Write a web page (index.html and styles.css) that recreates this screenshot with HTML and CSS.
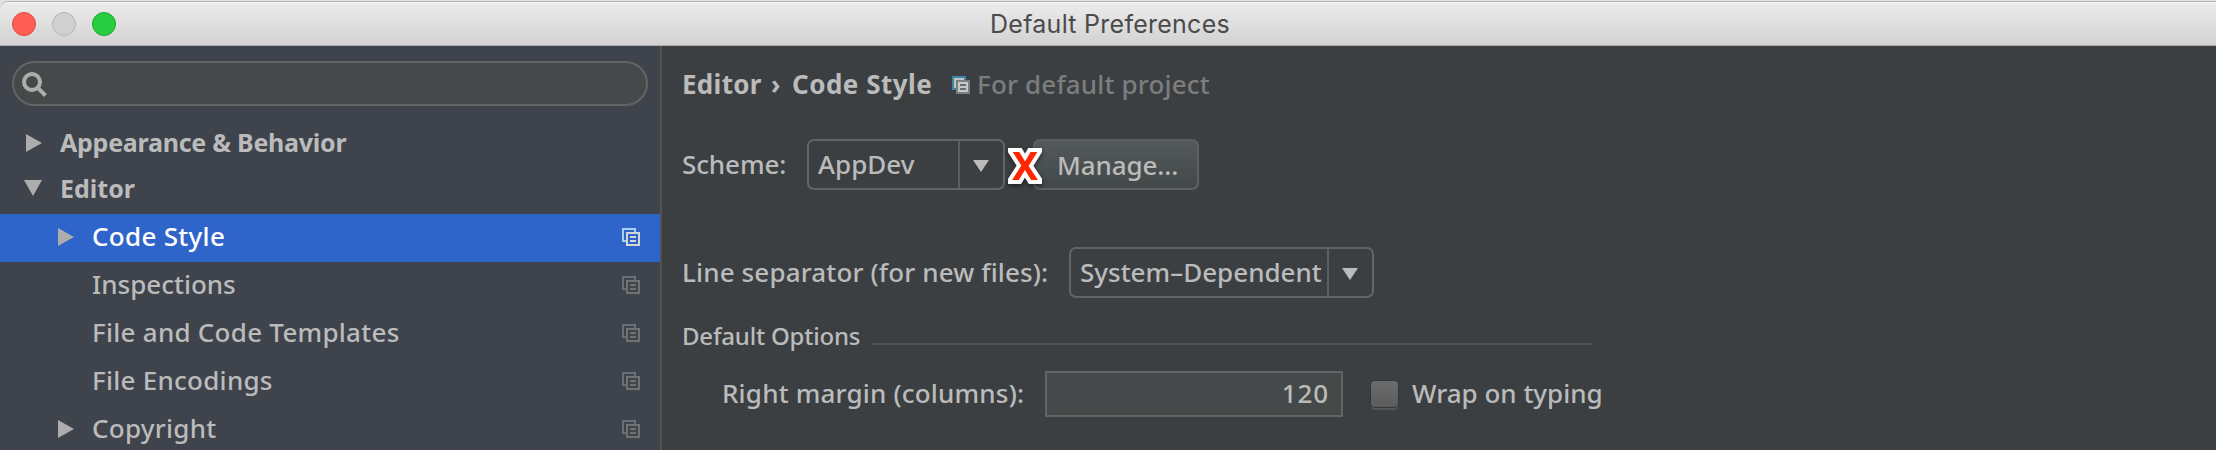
FILE: index.html
```
<!DOCTYPE html>
<html lang="en">
<head>
<meta charset="utf-8">
<title>Default Preferences</title>
<link rel="stylesheet" href="styles.css">
</head>
<body>
<svg width="0" height="0" class="defs" aria-hidden="true">
  <symbol id="right" viewBox="0 0 16 18"><path d="M0 0L16 9L0 18Z"/></symbol>
  <symbol id="down" viewBox="0 0 18 16" preserveAspectRatio="none"><path d="M0 0H18L9 16Z"/></symbol>
  <symbol id="pages" viewBox="0 0 18 18">
    <path class="back" d="M0 0H14V4H12V2H2V12H4V14H0Z"/>
    <path class="front" fill-rule="evenodd" d="M4 4H18V18H4ZM6 6V16H16V6ZM8 8H14V10H8ZM8 12H14V14H8Z"/>
  </symbol>
</svg>
<div class="window">
  <header class="titlebar">
    <div class="lights">
      <span class="light close"></span><span class="light minimize"></span><span class="light zoom"></span>
    </div>
    <h1 class="title">Default Preferences</h1>
  </header>
  <div class="body">
    <aside class="sidebar">
      <div class="search">
        <svg class="magnifier" viewBox="0 0 26 26"><circle cx="10" cy="10" r="8"/><path d="M15.8 15.8L23.5 23.5"/></svg>
      </div>
      <nav class="tree">
        <div class="row top first"><svg class="arrow right"><use href="#right"/></svg><span class="label ls-appearance">Appearance &amp; Behavior</span></div>
        <div class="row top"><svg class="arrow down"><use href="#down"/></svg><span class="label">Editor</span></div>
        <div class="row child selected"><svg class="arrow right"><use href="#right"/></svg><span class="label ls-wide">Code Style</span><svg class="pages"><use href="#pages"/></svg></div>
        <div class="row child"><span class="arrow"></span><span class="label">Inspections</span><svg class="pages"><use href="#pages"/></svg></div>
        <div class="row child"><span class="arrow"></span><span class="label ls-mid">File and Code Templates</span><svg class="pages"><use href="#pages"/></svg></div>
        <div class="row child"><span class="arrow"></span><span class="label ls-mid">File Encodings</span><svg class="pages"><use href="#pages"/></svg></div>
        <div class="row child"><svg class="arrow right"><use href="#right"/></svg><span class="label ls-mid">Copyright</span><svg class="pages"><use href="#pages"/></svg></div>
      </nav>
    </aside>
    <main class="content">
      <div class="crumbs">
        <b class="crumb-root">Editor</b><b class="sep">›</b><b class="crumb-page">Code Style</b>
        <svg class="project-icon" viewBox="0 0 18 18">
          <path fill="#3f86a6" d="M0 0H14V14H0Z"/>
          <path fill="#c0c3c4" d="M2 2H12V12H2Z"/>
          <path fill="#7b7f80" d="M4 4H18V18H4Z"/>
          <path fill="#c5c7c8" d="M6 6H16V16H6Z"/>
          <path fill="#686c6e" d="M8 8H14V10H8ZM8 12H14V14H8Z"/>
        </svg>
        <span class="scope">For default project</span>
      </div>
      <div class="line scheme">
        <label class="scheme-label">Scheme:</label>
        <div class="combo combo-scheme"><span class="value">AppDev</span><span class="drop"><svg class="caret"><use href="#down"/></svg></span></div>
        <button class="manage">Manage...<span class="marker">X</span></button>
      </div>
      <div class="line separator">
        <label class="separator-label">Line separator (for new files):</label>
        <div class="combo combo-separator"><span class="value">System–Dependent</span><span class="drop"><svg class="caret"><use href="#down"/></svg></span></div>
      </div>
      <div class="group"><span class="group-title">Default Options</span><span class="rule"></span></div>
      <div class="line margin-row">
        <label class="margin-label">Right margin (columns):</label>
        <div class="field">120</div>
        <span class="checkbox"></span>
        <label class="wrap-label">Wrap on typing</label>
      </div>
    </main>
  </div>
</div>
</body>
</html>
```
FILE: styles.css
```
* { box-sizing: border-box; }
body { margin: 0; background: #e4e4e4; }
.defs { position: absolute; }
.window {
  width: 2216px; height: 450px; overflow: hidden;
  display: flex; flex-direction: column;
  font: 500 26px/44px "Noto Sans", sans-serif;
  color: #bbbbbb; white-space: nowrap;
}
.titlebar {
  flex: none; height: 45px; margin-top: 1px;
  display: grid; grid-template-columns: 1fr auto 1fr; align-items: center;
  border-top: 1px solid #b4b4b4; border-bottom: 1px solid #a9acab;
  border-top-left-radius: 8px;
  background: linear-gradient(#f6f6f6 0, #ebebeb 2px, #d2d2d2 100%);
}
.lights { display: flex; gap: 16px; padding-left: 12px; }
.light { width: 24px; height: 24px; border-radius: 50%; border: 1px solid; }
.close { background: #ff5f57; border-color: #e2463f; }
.minimize { background: #d0d0d0; border-color: #b4b4b4; }
.zoom { background: #28cd41; border-color: #17a92b; }
.title { margin: 0; padding: 2px 0 0 4px; font: 400 25px/41px Inter, sans-serif; letter-spacing: .26px; color: #4b4b4b; }

.body { flex: 1; display: flex; min-height: 0; background: #3c3f41; }
.sidebar { flex: none; width: 662px; border-right: 2px solid #515151; background: #3e434c; }
.search {
  width: 636px; height: 45px; margin: 15px 0 12px 12px; padding: 9px 0 0 8px;
  border: 2px solid #646464; border-radius: 23px; background: #45494a;
}
.magnifier { display: block; width: 26px; height: 26px; fill: none; stroke: #adadad; stroke-width: 4; }
.row { display: flex; align-items: center; height: 48px; padding: 0 20px 4px 58px; }
.row.child { padding-bottom: 5px; }
.row.top { padding-left: 24px; font-weight: 700; font-size: 25px; }
.row.top .arrow { width: 18px; margin-right: 16px; }
.row.top .label { padding-left: 2px; }
.row.top .arrow.right { width: 16px; margin: 0 16px 0 2px; }
.row.first { padding-bottom: 0; }
.row.first .arrow { position: relative; top: 1px; }
.arrow { flex: none; width: 16px; height: 18px; margin-right: 18px; fill: #adadad; }
.row.child .arrow { position: relative; top: 1px; }
.arrow.down { height: 16px; }
.label { flex: 1; }
.ls-appearance { letter-spacing: -.25px; }
.ls-wide { letter-spacing: .3px; }
.ls-mid { letter-spacing: .26px; }
.selected { background: #2f65ca; color: #ffffff; }
.pages { width: 18px; height: 18px; position: relative; top: 1px; }
.pages { --back: #66717c; --front: #727272; }
.back { fill: var(--back); }
.front { fill: var(--front); }
.selected .pages { --back: #a7cdf0; --front: #d6d6d6; }

.content { flex: 1; padding-left: 20px; }
.crumbs { display: flex; align-items: center; height: 76px; }
.crumb-root { letter-spacing: .3px; }
.crumb-page { letter-spacing: .5px; }
.sep { width: 29px; padding-left: 8px; }
.crumb-root { width: 81px; }
.crumb-page { width: 160px; }
.project-icon { width: 18px; height: 18px; position: relative; top: 1px; }
.scope { padding-left: 7px; letter-spacing: .16px; color: #7d7d7d; }
.line { display: flex; align-items: center; }
.scheme { height: 51px; margin-top: 17px; }
.separator { height: 51px; margin-top: 57px; }
.line > label { position: relative; top: -1px; }
.scheme-label { width: 125px; letter-spacing: -.1px; }
.separator-label { width: 387px; letter-spacing: .14px; }
.combo { display: flex; height: 51px; border: 2px solid #646464; border-radius: 7px; line-height: 46px; }
.combo-scheme { width: 198px; }
.combo-separator { width: 305px; }
.value { flex: 1; padding-left: 9px; }
.drop { width: 45px; border-left: 2px solid #5c5e5f; padding: 19px 0 0 13px; }
.caret { display: block; width: 16px; height: 12px; fill: #bbbbbb; }
.manage {
  position: relative; width: 166px; height: 51px; margin-left: 28px; padding: 0 0 0 22px;
  border: 2px solid #5c6163; border-radius: 7px; text-align: left;
  background: linear-gradient(#54595b, #424748);
  font: inherit; line-height: 46px; letter-spacing: -.12px; color: #bbbbbb;
}
.marker {
  position: absolute; left: -23px; top: -3px; width: 24px; text-align: center;
  font: 700 39px/53px "Noto Sans", sans-serif; letter-spacing: 0; color: #ff2600;
  -webkit-text-stroke: 8px #ffffff; paint-order: stroke fill; stroke-linejoin: round;
  filter: drop-shadow(0 2px 2px rgba(0, 0, 0, .5));
}
.group { display: flex; height: 29px; margin-top: 24px; font-size: 24px; line-height: 28px; }
.group-title { width: 191px; letter-spacing: -.2px; }
.rule { width: 720px; height: 2px; margin-top: 21px; background: #515151; }
.margin-row { height: 46px; margin-top: 20px; padding-left: 40px; }
.margin-label { width: 323px; letter-spacing: .19px; }
.field {
  width: 298px; height: 46px; padding-right: 12px; text-align: right;
  border: 2px solid #646464; background: #45494a; line-height: 41px; letter-spacing: .9px;
}
.checkbox {
  width: 27px; height: 26px; margin: 0 14px 0 28px; border-radius: 4px;
  background: linear-gradient(#6c6c6c, #5c5c5c);
  box-shadow: 0 0 0 1px #333536, 0 3px 1px #56585a;
}
```
